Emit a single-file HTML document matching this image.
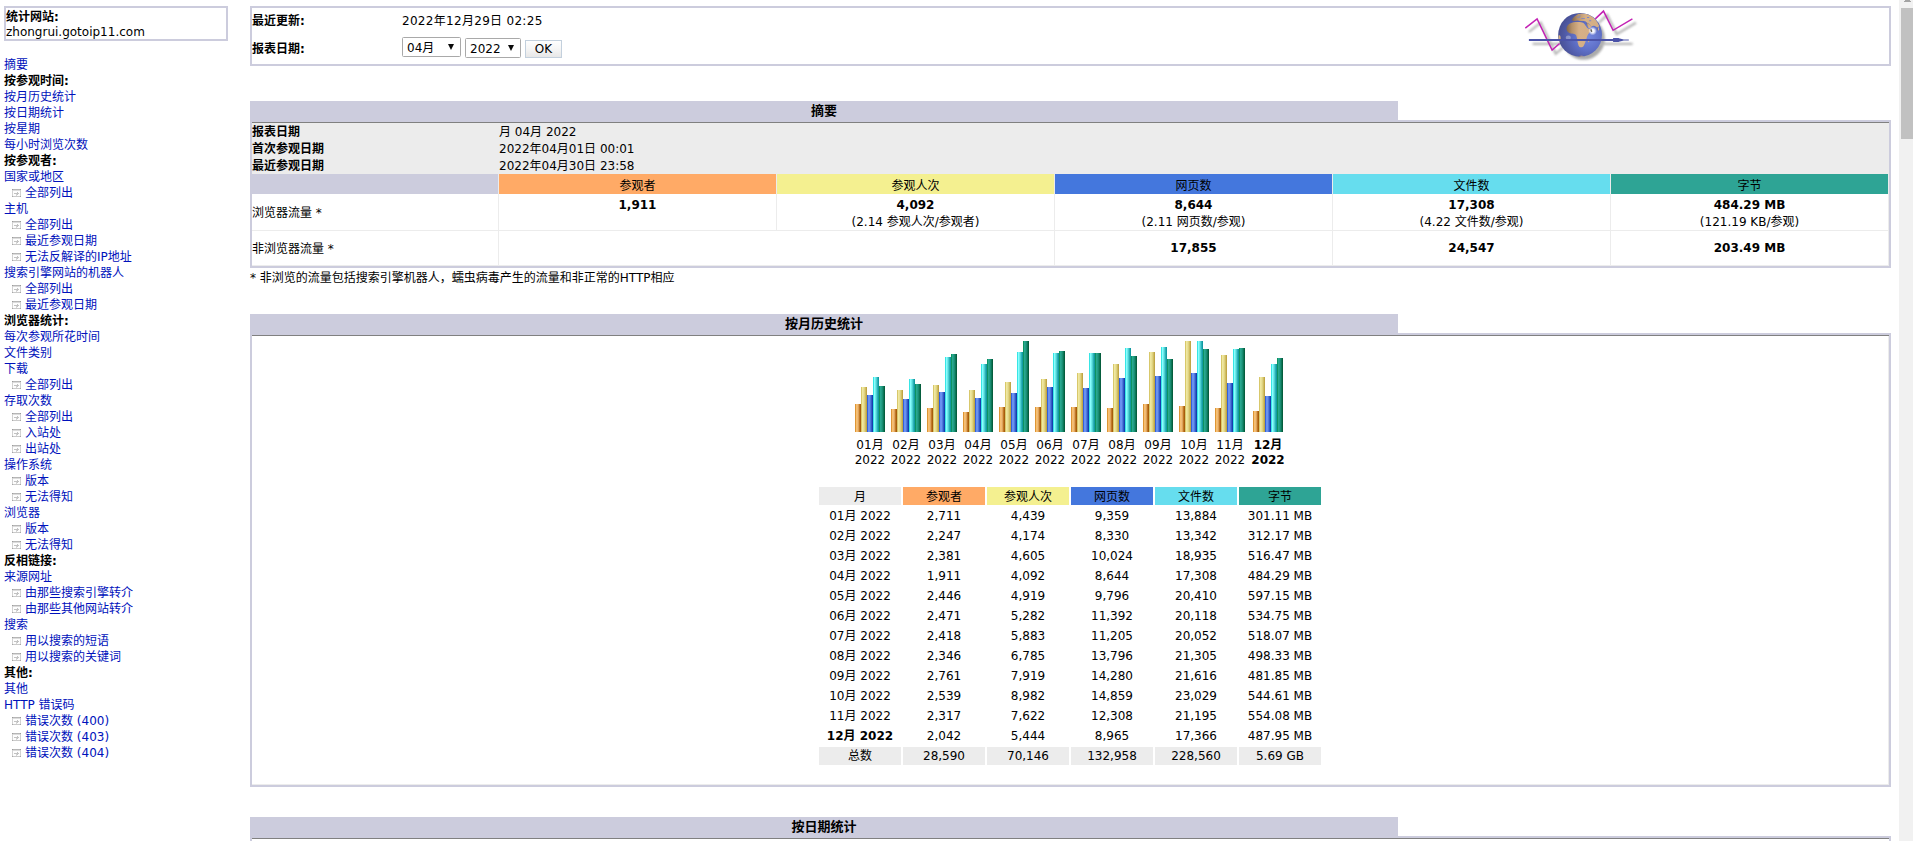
<!DOCTYPE html>
<html lang="zh-CN"><head><meta charset="utf-8"><title>Statistics for zhongrui.gotoip11.com (2022-04)</title>
<style>
html,body{margin:0;padding:0;background:#fff;}
body{width:1913px;height:841px;overflow:hidden;position:relative;font:12px/16px 'DejaVu Sans','Liberation Sans','Noto Sans CJK SC',sans-serif;color:#000;}
.a{position:absolute;white-space:nowrap;}
.t{position:absolute;white-space:nowrap;line-height:16px;height:16px;}
.c{text-align:center;}
.b{font-weight:bold;}
a{color:#0011BB;text-decoration:none;}
.box{position:absolute;box-sizing:border-box;border:2px solid #CCCCDD;background:#fff;}
.title{position:absolute;background:#CCCCDD;font-size:13px;font-weight:bold;text-align:center;}
.ln{position:absolute;background:#808080;height:1px;}
.mi{position:absolute;left:4px;height:16px;line-height:16px;white-space:nowrap;}
.ic{position:absolute;left:12px;width:9px;height:8px;background:linear-gradient(#9C9C9C,#9C9C9C) 0px 0px/1px 1px no-repeat,linear-gradient(#9C9C9C,#9C9C9C) 8px 0px/1px 1px no-repeat,linear-gradient(#A8A8A8,#A8A8A8) 0px 7px/1px 1px no-repeat,linear-gradient(#A8A8A8,#A8A8A8) 8px 7px/1px 1px no-repeat,linear-gradient(#B6B6B6,#B6B6B6) 0px 0px/9px 1px no-repeat,linear-gradient(#DCDCDC,#DCDCDC) 1px 1px/7px 1px no-repeat,linear-gradient(#D2D2D2,#D2D2D2) 0px 0px/1px 8px no-repeat,linear-gradient(#D2D2D2,#D2D2D2) 8px 0px/1px 8px no-repeat,linear-gradient(#CACACA,#CACACA) 0px 7px/9px 1px no-repeat,linear-gradient(#C2C2C2,#C2C2C2) 2px 4px/5px 1px no-repeat,linear-gradient(#C2C2C2,#C2C2C2) 5px 3px/1px 3px no-repeat,linear-gradient(#D4D4D4,#D4D4D4) 4px 5px/1px 2px no-repeat,linear-gradient(#FDFDFD,#FDFDFD) 0px 0px/9px 8px no-repeat;}
.sel{position:absolute;box-sizing:border-box;border:1px solid #A9A9A9;border-radius:1.5px;background:#fff;height:20px;}
.btn{position:absolute;box-sizing:border-box;border:1px solid #C3D0DD;background:linear-gradient(#FEFEFE,#F5F5F5 50%,#E7E7E7);height:18px;text-align:center;}
.arr{position:absolute;width:0;height:0;border-left:3.5px solid transparent;border-right:3.5px solid transparent;border-top:6px solid #0A0A0A;}
.hc{position:absolute;height:20px;line-height:24px;overflow:hidden;text-align:center;}
.vl{position:absolute;width:1px;background:#ECECEC;}
.hl{position:absolute;height:1px;background:#ECECEC;}
.bar{position:absolute;width:6px;}
.vu{background:linear-gradient(90deg,#D08018 0,#F8C070 25%,#ECB878 50%,#B86C14 80%,#9C5008 100%);}
.vv{background:linear-gradient(90deg,#CCB850 0,#F0E8A0 25%,#E6DC90 50%,#CCB858 80%,#B89838 100%);}
.vp{background:linear-gradient(90deg,#1848D0 0,#78A0F8 30%,#6088E8 50%,#2850C0 80%,#0830A0 100%);}
.vh{background:linear-gradient(90deg,#10D8D8 0,#88FFFF 25%,#60E0E0 50%,#20A8B0 80%,#089098 100%);}
.vk{background:linear-gradient(90deg,#008848 0,#28A890 25%,#209880 50%,#087050 80%,#045030 100%);}
.th{position:absolute;width:82px;height:18px;line-height:20px;overflow:hidden;text-align:center;}
.td{position:absolute;width:82px;height:18px;line-height:18px;overflow:hidden;text-align:center;white-space:nowrap;}
</style></head><body>
<div class="box" style="left:4px;top:6px;width:224px;height:35px"></div>
<div class="t b" style="left:6px;top:9px">统计网站:</div>
<div class="t" style="left:6px;top:24px">zhongrui.gotoip11.com</div>
<div class="mi" style="top:57px"><a>摘要</a></div>
<div class="mi b" style="top:73px">按参观时间:</div>
<div class="mi" style="top:89px"><a>按月历史统计</a></div>
<div class="mi" style="top:105px"><a>按日期统计</a></div>
<div class="mi" style="top:121px"><a>按星期</a></div>
<div class="mi" style="top:137px"><a>每小时浏览次数</a></div>
<div class="mi b" style="top:153px">按参观者:</div>
<div class="mi" style="top:169px"><a>国家或地区</a></div>
<i class="ic" style="top:189px"></i><div class="mi" style="top:185px;left:25px"><a>全部列出</a></div>
<div class="mi" style="top:201px"><a>主机</a></div>
<i class="ic" style="top:221px"></i><div class="mi" style="top:217px;left:25px"><a>全部列出</a></div>
<i class="ic" style="top:237px"></i><div class="mi" style="top:233px;left:25px"><a>最近参观日期</a></div>
<i class="ic" style="top:253px"></i><div class="mi" style="top:249px;left:25px"><a>无法反解译的IP地址</a></div>
<div class="mi" style="top:265px"><a>搜索引擎网站的机器人</a></div>
<i class="ic" style="top:285px"></i><div class="mi" style="top:281px;left:25px"><a>全部列出</a></div>
<i class="ic" style="top:301px"></i><div class="mi" style="top:297px;left:25px"><a>最近参观日期</a></div>
<div class="mi b" style="top:313px">浏览器统计:</div>
<div class="mi" style="top:329px"><a>每次参观所花时间</a></div>
<div class="mi" style="top:345px"><a>文件类别</a></div>
<div class="mi" style="top:361px"><a>下载</a></div>
<i class="ic" style="top:381px"></i><div class="mi" style="top:377px;left:25px"><a>全部列出</a></div>
<div class="mi" style="top:393px"><a>存取次数</a></div>
<i class="ic" style="top:413px"></i><div class="mi" style="top:409px;left:25px"><a>全部列出</a></div>
<i class="ic" style="top:429px"></i><div class="mi" style="top:425px;left:25px"><a>入站处</a></div>
<i class="ic" style="top:445px"></i><div class="mi" style="top:441px;left:25px"><a>出站处</a></div>
<div class="mi" style="top:457px"><a>操作系统</a></div>
<i class="ic" style="top:477px"></i><div class="mi" style="top:473px;left:25px"><a>版本</a></div>
<i class="ic" style="top:493px"></i><div class="mi" style="top:489px;left:25px"><a>无法得知</a></div>
<div class="mi" style="top:505px"><a>浏览器</a></div>
<i class="ic" style="top:525px"></i><div class="mi" style="top:521px;left:25px"><a>版本</a></div>
<i class="ic" style="top:541px"></i><div class="mi" style="top:537px;left:25px"><a>无法得知</a></div>
<div class="mi b" style="top:553px">反相链接:</div>
<div class="mi" style="top:569px"><a>来源网址</a></div>
<i class="ic" style="top:589px"></i><div class="mi" style="top:585px;left:25px"><a>由那些搜索引擎转介</a></div>
<i class="ic" style="top:605px"></i><div class="mi" style="top:601px;left:25px"><a>由那些其他网站转介</a></div>
<div class="mi" style="top:617px"><a>搜索</a></div>
<i class="ic" style="top:637px"></i><div class="mi" style="top:633px;left:25px"><a>用以搜索的短语</a></div>
<i class="ic" style="top:653px"></i><div class="mi" style="top:649px;left:25px"><a>用以搜索的关键词</a></div>
<div class="mi b" style="top:665px">其他:</div>
<div class="mi" style="top:681px"><a>其他</a></div>
<div class="mi" style="top:697px"><a>HTTP 错误码</a></div>
<i class="ic" style="top:717px"></i><div class="mi" style="top:713px;left:25px"><a>错误次数 (400)</a></div>
<i class="ic" style="top:733px"></i><div class="mi" style="top:729px;left:25px"><a>错误次数 (403)</a></div>
<i class="ic" style="top:749px"></i><div class="mi" style="top:745px;left:25px"><a>错误次数 (404)</a></div>
<div class="box" style="left:250px;top:6px;width:1641px;height:60px"></div>
<div class="t b" style="left:252px;top:13px">最近更新:</div>
<div class="t" style="left:402px;top:13px;letter-spacing:.3px">2022年12月29日 02:25</div>
<div class="t b" style="left:252px;top:41px">报表日期:</div>
<div class="sel" style="left:402px;top:37px;width:59px"><span class="t" style="left:4px;top:2px">04月</span><i class="arr" style="left:45px;top:6px"></i></div>
<div class="sel" style="left:465px;top:38px;width:56px"><span class="t" style="left:4px;top:2px">2022</span><i class="arr" style="left:42px;top:6px"></i></div>
<div class="btn" style="left:525px;top:40px;width:37px"><span class="t" style="left:0;width:35px;top:0">OK</span></div>
<svg class="a" style="left:1515px;top:5px" width="130" height="60" viewBox="0 0 130 60">
<defs>
<filter id="sb" x="-20%" y="-20%" width="140%" height="140%"><feGaussianBlur stdDeviation="1.1"/></filter>
<radialGradient id="gl" cx="0.68" cy="0.55" r="0.75"><stop offset="0" stop-color="#7488E0"/><stop offset="0.4" stop-color="#5F70C8"/><stop offset="0.72" stop-color="#4F59A4"/><stop offset="1" stop-color="#434A8A"/></radialGradient>
<radialGradient id="sp" cx="0.5" cy="0.5" r="0.5"><stop offset="0" stop-color="#fff" stop-opacity="1"/><stop offset="0.4" stop-color="#fff" stop-opacity="0.9"/><stop offset="1" stop-color="#fff" stop-opacity="0"/></radialGradient>
<linearGradient id="ld" x1="0" y1="0" x2="1" y2="0"><stop offset="0" stop-color="#80644A"/><stop offset="0.22" stop-color="#B5916A"/><stop offset="0.5" stop-color="#D6B087"/><stop offset="1" stop-color="#D4AE84"/></linearGradient>
<clipPath id="gc"><circle cx="65.1" cy="29.8" r="21.9"/></clipPath>
</defs>
<g filter="url(#sb)" opacity="0.55" transform="translate(3.6,3.8)">
<polyline points="10.3,23.2 22.1,13.9 37.1,45 44.6,38.5" fill="none" stroke="#777" stroke-width="2.2"/>
<polyline points="80.3,13.9 88.5,6.1 98.1,25.3 117.4,13.9" fill="none" stroke="#777" stroke-width="2.2"/>
<circle cx="65.1" cy="29.8" r="21.2" fill="#666"/>
<rect x="14" y="34" width="100" height="2.2" fill="#777"/>
</g>
<polyline points="10.3,23.2 22.1,13.9 37.1,45 44.6,38.5" fill="none" stroke="#C322B4" stroke-width="1.5" stroke-linejoin="miter"/>
<polyline points="80.3,13.9 88.5,6.1 98.1,25.3 117.4,13.9" fill="none" stroke="#C322B4" stroke-width="1.5" stroke-linejoin="miter"/>
<circle cx="65.1" cy="29.8" r="21.9" fill="url(#gl)"/>
<g clip-path="url(#gc)">
<g transform="scale(0.07135)" fill="url(#ld)">
<path d="M728,300 C712,332 722,368 755,388 C798,408 842,398 857,424 C872,462 872,522 892,570 C907,600 944,600 964,570 C990,522 1004,472 1010,442 C1020,412 1056,372 1072,336 C1046,342 1018,336 1003,310 C988,280 967,250 942,244 C900,238 858,238 818,243 C776,253 744,274 728,300 Z"/>
<path d="M795,215 C805,178 846,146 888,126 C940,110 1004,120 1056,146 C1116,182 1156,228 1178,290 C1170,322 1152,316 1132,300 C1112,286 1086,290 1070,306 C1050,286 1036,256 1010,250 C1000,236 985,226 960,224 C930,227 905,222 880,217 C850,224 818,230 795,215 Z"/>
<path d="M1000,250 C1030,255 1055,290 1070,305 C1060,325 1045,330 1030,322 C1015,300 1005,275 1000,250 Z"/>
<g fill="#6B7FD6"><rect x="870" y="165" width="40" height="10"/><rect x="930" y="185" width="50" height="9"/><rect x="1010" y="170" width="30" height="12"/><rect x="1040" y="215" width="28" height="12"/><rect x="900" y="150" width="22" height="8"/></g>
<ellipse cx="622" cy="470" rx="18" ry="45"/>
<ellipse cx="1168" cy="335" rx="10" ry="22"/>
<ellipse cx="1035" cy="500" rx="10" ry="24" transform="rotate(15 1035 500)"/>
<ellipse cx="930" cy="718" rx="40" ry="8"/>
</g>
<ellipse cx="53.3" cy="32.8" rx="2.6" ry="2.2" fill="#fff" opacity="0.32"/>
<circle cx="77.6" cy="26" r="4.4" fill="url(#sp)"/>
<path d="M75.6,23.9 l1.1,0.4 0.7,2.3 -1.2,0.6 -0.8,-1.6z" fill="#5A564E" opacity="0.9"/>
</g>
<rect x="13.9" y="34" width="85" height="2" fill="#4A52A8"/>
<path d="M98.1,33 h5.7 v0.3 l5,1.3 h5 v0.9 h-5 l-5,1.3 v0.3 h-5.7z" fill="#4A52A8"/>
</svg>

<div class="title" style="left:250px;top:101px;width:1148px;height:19px;line-height:19px">摘要</div>
<div class="box" style="left:250px;top:120px;width:1641px;height:148px;background:#fff"></div>
<div class="ln" style="left:252px;top:122px;width:1637px"></div>
<div class="a" style="left:252px;top:123px;width:1637px;height:51px;background:#ECECEC"></div>
<div class="t b" style="left:252px;top:124px">报表日期</div><div class="t" style="left:499px;top:124px">月 04月 2022</div>
<div class="t b" style="left:252px;top:141px">首次参观日期</div><div class="t" style="left:499px;top:141px">2022年04月01日 00:01</div>
<div class="t b" style="left:252px;top:158px">最近参观日期</div><div class="t" style="left:499px;top:158px">2022年04月30日 23:58</div>
<div class="a" style="left:252px;top:174px;width:246px;height:20px;background:#CCCCDD"></div>
<div class="hc" style="left:499px;top:174px;width:277px;background:#FFAA66">参观者</div>
<div class="hc" style="left:777px;top:174px;width:277px;background:#F4F090">参观人次</div>
<div class="hc" style="left:1055px;top:174px;width:277px;background:#4477DD">网页数</div>
<div class="hc" style="left:1333px;top:174px;width:277px;background:#66DDEE">文件数</div>
<div class="hc" style="left:1611px;top:174px;width:277px;background:#2EA495">字节</div>
<div class="vl" style="left:498px;top:174px;height:92px"></div>
<div class="vl" style="left:776px;top:174px;height:92px"></div>
<div class="vl" style="left:1054px;top:174px;height:92px"></div>
<div class="vl" style="left:1332px;top:174px;height:92px"></div>
<div class="vl" style="left:1610px;top:174px;height:92px"></div>
<div class="vl" style="left:1888px;top:174px;height:92px"></div>
<div class="hl" style="left:252px;top:230px;width:1637px"></div>
<div class="hl" style="left:252px;top:265px;width:1637px"></div>
<div class="a" style="left:776px;top:231px;width:1px;height:34px;background:#fff"></div>
<div class="t" style="left:252px;top:205px">浏览器流量 *</div>
<div class="t" style="left:252px;top:241px">非浏览器流量 *</div>
<div class="t c b" style="left:499px;width:277px;top:197px">1,911</div>
<div class="t c b" style="left:777px;width:277px;top:197px">4,092</div>
<div class="t c" style="left:777px;width:277px;top:214px">(2.14 参观人次/参观者)</div>
<div class="t c b" style="left:1055px;width:277px;top:197px">8,644</div>
<div class="t c" style="left:1055px;width:277px;top:214px">(2.11 网页数/参观)</div>
<div class="t c b" style="left:1333px;width:277px;top:197px">17,308</div>
<div class="t c" style="left:1333px;width:277px;top:214px">(4.22 文件数/参观)</div>
<div class="t c b" style="left:1611px;width:277px;top:197px">484.29 MB</div>
<div class="t c" style="left:1611px;width:277px;top:214px">(121.19 KB/参观)</div>
<div class="t c b" style="left:1055px;width:277px;top:240px">17,855</div>
<div class="t c b" style="left:1333px;width:277px;top:240px">24,547</div>
<div class="t c b" style="left:1611px;width:277px;top:240px">203.49 MB</div>
<div class="t" style="left:250px;top:270px">* 非浏览的流量包括搜索引擎机器人，蠕虫病毒产生的流量和非正常的HTTP相应</div>
<div class="title" style="left:250px;top:314px;width:1148px;height:19px;line-height:19px">按月历史统计</div>
<div class="box" style="left:250px;top:333px;width:1641px;height:454px;background:#fff"></div>
<div class="ln" style="left:252px;top:335px;width:1637px"></div>
<div class="hl" style="left:252px;top:784px;width:1637px"></div><div class="vl" style="left:1888px;top:336px;height:449px"></div>
<i class="bar vu" style="left:855px;top:404px;height:28px"></i>
<i class="bar vv" style="left:861px;top:387px;height:45px"></i>
<i class="bar vp" style="left:867px;top:395px;height:37px"></i>
<i class="bar vh" style="left:873px;top:377px;height:55px"></i>
<i class="bar vk" style="left:879px;top:386px;height:46px"></i>
<div class="t c" style="left:845px;width:50px;top:437px">01月</div>
<div class="t c" style="left:845px;width:50px;top:452px">2022</div>
<i class="bar vu" style="left:891px;top:409px;height:23px"></i>
<i class="bar vv" style="left:897px;top:390px;height:42px"></i>
<i class="bar vp" style="left:903px;top:399px;height:33px"></i>
<i class="bar vh" style="left:909px;top:379px;height:53px"></i>
<i class="bar vk" style="left:915px;top:384px;height:48px"></i>
<div class="t c" style="left:881px;width:50px;top:437px">02月</div>
<div class="t c" style="left:881px;width:50px;top:452px">2022</div>
<i class="bar vu" style="left:927px;top:408px;height:24px"></i>
<i class="bar vv" style="left:933px;top:385px;height:47px"></i>
<i class="bar vp" style="left:939px;top:392px;height:40px"></i>
<i class="bar vh" style="left:945px;top:357px;height:75px"></i>
<i class="bar vk" style="left:951px;top:354px;height:78px"></i>
<div class="t c" style="left:917px;width:50px;top:437px">03月</div>
<div class="t c" style="left:917px;width:50px;top:452px">2022</div>
<i class="bar vu" style="left:963px;top:412px;height:20px"></i>
<i class="bar vv" style="left:969px;top:390px;height:42px"></i>
<i class="bar vp" style="left:975px;top:398px;height:34px"></i>
<i class="bar vh" style="left:981px;top:364px;height:68px"></i>
<i class="bar vk" style="left:987px;top:359px;height:73px"></i>
<div class="t c" style="left:953px;width:50px;top:437px">04月</div>
<div class="t c" style="left:953px;width:50px;top:452px">2022</div>
<i class="bar vu" style="left:999px;top:407px;height:25px"></i>
<i class="bar vv" style="left:1005px;top:382px;height:50px"></i>
<i class="bar vp" style="left:1011px;top:393px;height:39px"></i>
<i class="bar vh" style="left:1017px;top:352px;height:80px"></i>
<i class="bar vk" style="left:1023px;top:341px;height:91px"></i>
<div class="t c" style="left:989px;width:50px;top:437px">05月</div>
<div class="t c" style="left:989px;width:50px;top:452px">2022</div>
<i class="bar vu" style="left:1035px;top:407px;height:25px"></i>
<i class="bar vv" style="left:1041px;top:379px;height:53px"></i>
<i class="bar vp" style="left:1047px;top:387px;height:45px"></i>
<i class="bar vh" style="left:1053px;top:353px;height:79px"></i>
<i class="bar vk" style="left:1059px;top:351px;height:81px"></i>
<div class="t c" style="left:1025px;width:50px;top:437px">06月</div>
<div class="t c" style="left:1025px;width:50px;top:452px">2022</div>
<i class="bar vu" style="left:1071px;top:407px;height:25px"></i>
<i class="bar vv" style="left:1077px;top:373px;height:59px"></i>
<i class="bar vp" style="left:1083px;top:388px;height:44px"></i>
<i class="bar vh" style="left:1089px;top:353px;height:79px"></i>
<i class="bar vk" style="left:1095px;top:353px;height:79px"></i>
<div class="t c" style="left:1061px;width:50px;top:437px">07月</div>
<div class="t c" style="left:1061px;width:50px;top:452px">2022</div>
<i class="bar vu" style="left:1107px;top:408px;height:24px"></i>
<i class="bar vv" style="left:1113px;top:364px;height:68px"></i>
<i class="bar vp" style="left:1119px;top:378px;height:54px"></i>
<i class="bar vh" style="left:1125px;top:348px;height:84px"></i>
<i class="bar vk" style="left:1131px;top:356px;height:76px"></i>
<div class="t c" style="left:1097px;width:50px;top:437px">08月</div>
<div class="t c" style="left:1097px;width:50px;top:452px">2022</div>
<i class="bar vu" style="left:1143px;top:404px;height:28px"></i>
<i class="bar vv" style="left:1149px;top:352px;height:80px"></i>
<i class="bar vp" style="left:1155px;top:376px;height:56px"></i>
<i class="bar vh" style="left:1161px;top:347px;height:85px"></i>
<i class="bar vk" style="left:1167px;top:359px;height:73px"></i>
<div class="t c" style="left:1133px;width:50px;top:437px">09月</div>
<div class="t c" style="left:1133px;width:50px;top:452px">2022</div>
<i class="bar vu" style="left:1179px;top:406px;height:26px"></i>
<i class="bar vv" style="left:1185px;top:341px;height:91px"></i>
<i class="bar vp" style="left:1191px;top:373px;height:59px"></i>
<i class="bar vh" style="left:1197px;top:341px;height:91px"></i>
<i class="bar vk" style="left:1203px;top:349px;height:83px"></i>
<div class="t c" style="left:1169px;width:50px;top:437px">10月</div>
<div class="t c" style="left:1169px;width:50px;top:452px">2022</div>
<i class="bar vu" style="left:1215px;top:408px;height:24px"></i>
<i class="bar vv" style="left:1221px;top:355px;height:77px"></i>
<i class="bar vp" style="left:1227px;top:383px;height:49px"></i>
<i class="bar vh" style="left:1233px;top:349px;height:83px"></i>
<i class="bar vk" style="left:1239px;top:348px;height:84px"></i>
<div class="t c" style="left:1205px;width:50px;top:437px">11月</div>
<div class="t c" style="left:1205px;width:50px;top:452px">2022</div>
<i class="bar vu" style="left:1253px;top:411px;height:21px"></i>
<i class="bar vv" style="left:1259px;top:377px;height:55px"></i>
<i class="bar vp" style="left:1265px;top:396px;height:36px"></i>
<i class="bar vh" style="left:1271px;top:364px;height:68px"></i>
<i class="bar vk" style="left:1277px;top:358px;height:74px"></i>
<div class="t c b" style="left:1243px;width:50px;top:437px">12月</div>
<div class="t c b" style="left:1243px;width:50px;top:452px">2022</div>
<div class="th" style="left:819px;top:487px;background:#ECECEC">月</div>
<div class="th" style="left:903px;top:487px;background:#FFAA66">参观者</div>
<div class="th" style="left:987px;top:487px;background:#F4F090">参观人次</div>
<div class="th" style="left:1071px;top:487px;background:#4477DD">网页数</div>
<div class="th" style="left:1155px;top:487px;background:#66DDEE">文件数</div>
<div class="th" style="left:1239px;top:487px;background:#2EA495">字节</div>
<div class="td" style="left:819px;top:507px">01月 2022</div>
<div class="td" style="left:903px;top:507px">2,711</div>
<div class="td" style="left:987px;top:507px">4,439</div>
<div class="td" style="left:1071px;top:507px">9,359</div>
<div class="td" style="left:1155px;top:507px">13,884</div>
<div class="td" style="left:1239px;top:507px">301.11 MB</div>
<div class="td" style="left:819px;top:527px">02月 2022</div>
<div class="td" style="left:903px;top:527px">2,247</div>
<div class="td" style="left:987px;top:527px">4,174</div>
<div class="td" style="left:1071px;top:527px">8,330</div>
<div class="td" style="left:1155px;top:527px">13,342</div>
<div class="td" style="left:1239px;top:527px">312.17 MB</div>
<div class="td" style="left:819px;top:547px">03月 2022</div>
<div class="td" style="left:903px;top:547px">2,381</div>
<div class="td" style="left:987px;top:547px">4,605</div>
<div class="td" style="left:1071px;top:547px">10,024</div>
<div class="td" style="left:1155px;top:547px">18,935</div>
<div class="td" style="left:1239px;top:547px">516.47 MB</div>
<div class="td" style="left:819px;top:567px">04月 2022</div>
<div class="td" style="left:903px;top:567px">1,911</div>
<div class="td" style="left:987px;top:567px">4,092</div>
<div class="td" style="left:1071px;top:567px">8,644</div>
<div class="td" style="left:1155px;top:567px">17,308</div>
<div class="td" style="left:1239px;top:567px">484.29 MB</div>
<div class="td" style="left:819px;top:587px">05月 2022</div>
<div class="td" style="left:903px;top:587px">2,446</div>
<div class="td" style="left:987px;top:587px">4,919</div>
<div class="td" style="left:1071px;top:587px">9,796</div>
<div class="td" style="left:1155px;top:587px">20,410</div>
<div class="td" style="left:1239px;top:587px">597.15 MB</div>
<div class="td" style="left:819px;top:607px">06月 2022</div>
<div class="td" style="left:903px;top:607px">2,471</div>
<div class="td" style="left:987px;top:607px">5,282</div>
<div class="td" style="left:1071px;top:607px">11,392</div>
<div class="td" style="left:1155px;top:607px">20,118</div>
<div class="td" style="left:1239px;top:607px">534.75 MB</div>
<div class="td" style="left:819px;top:627px">07月 2022</div>
<div class="td" style="left:903px;top:627px">2,418</div>
<div class="td" style="left:987px;top:627px">5,883</div>
<div class="td" style="left:1071px;top:627px">11,205</div>
<div class="td" style="left:1155px;top:627px">20,052</div>
<div class="td" style="left:1239px;top:627px">518.07 MB</div>
<div class="td" style="left:819px;top:647px">08月 2022</div>
<div class="td" style="left:903px;top:647px">2,346</div>
<div class="td" style="left:987px;top:647px">6,785</div>
<div class="td" style="left:1071px;top:647px">13,796</div>
<div class="td" style="left:1155px;top:647px">21,305</div>
<div class="td" style="left:1239px;top:647px">498.33 MB</div>
<div class="td" style="left:819px;top:667px">09月 2022</div>
<div class="td" style="left:903px;top:667px">2,761</div>
<div class="td" style="left:987px;top:667px">7,919</div>
<div class="td" style="left:1071px;top:667px">14,280</div>
<div class="td" style="left:1155px;top:667px">21,616</div>
<div class="td" style="left:1239px;top:667px">481.85 MB</div>
<div class="td" style="left:819px;top:687px">10月 2022</div>
<div class="td" style="left:903px;top:687px">2,539</div>
<div class="td" style="left:987px;top:687px">8,982</div>
<div class="td" style="left:1071px;top:687px">14,859</div>
<div class="td" style="left:1155px;top:687px">23,029</div>
<div class="td" style="left:1239px;top:687px">544.61 MB</div>
<div class="td" style="left:819px;top:707px">11月 2022</div>
<div class="td" style="left:903px;top:707px">2,317</div>
<div class="td" style="left:987px;top:707px">7,622</div>
<div class="td" style="left:1071px;top:707px">12,308</div>
<div class="td" style="left:1155px;top:707px">21,195</div>
<div class="td" style="left:1239px;top:707px">554.08 MB</div>
<div class="td b" style="left:819px;top:727px">12月 2022</div>
<div class="td" style="left:903px;top:727px">2,042</div>
<div class="td" style="left:987px;top:727px">5,444</div>
<div class="td" style="left:1071px;top:727px">8,965</div>
<div class="td" style="left:1155px;top:727px">17,366</div>
<div class="td" style="left:1239px;top:727px">487.95 MB</div>
<div class="td" style="left:819px;top:747px;background:#ECECEC">总数</div>
<div class="td" style="left:903px;top:747px;background:#ECECEC">28,590</div>
<div class="td" style="left:987px;top:747px;background:#ECECEC">70,146</div>
<div class="td" style="left:1071px;top:747px;background:#ECECEC">132,958</div>
<div class="td" style="left:1155px;top:747px;background:#ECECEC">228,560</div>
<div class="td" style="left:1239px;top:747px;background:#ECECEC">5.69 GB</div>
<div class="title" style="left:250px;top:817px;width:1148px;height:19px;line-height:19px">按日期统计</div>
<div class="a" style="left:250px;top:836px;width:1641px;height:40px;box-sizing:border-box;border:2px solid #CCCCDD;border-bottom:0;background:#fff"></div>
<div class="ln" style="left:252px;top:838px;width:1637px"></div>
<div class="a" style="left:1899px;top:0;width:14px;height:841px;background:#F1F1F1"></div>
<div class="a" style="left:1901px;top:8px;width:12px;height:131px;background:#C1C1C1"></div>
<div class="a" style="left:1905px;top:0;width:5px;height:1px;background:#A3A3A3"></div><div class="a" style="left:1904px;top:1px;width:7px;height:1px;background:#A3A3A3"></div>
</body></html>
